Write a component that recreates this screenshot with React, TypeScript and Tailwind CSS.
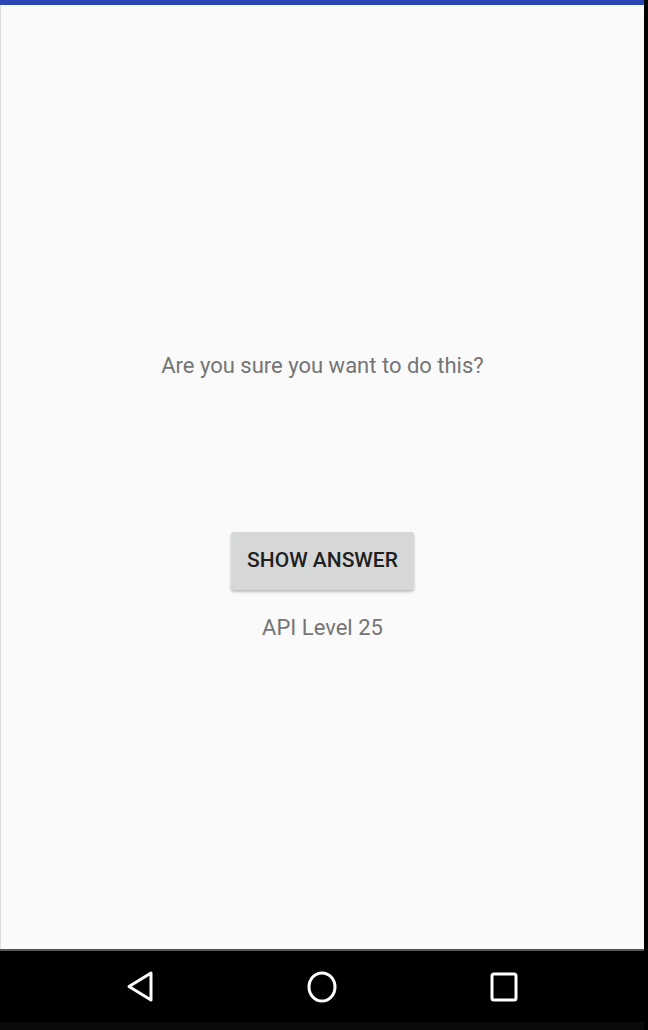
import React from "react";

function NavBar() {
    return (
        <div className="flex h-[73px] items-center border-t-2 border-[#555] bg-black pl-[126px]">
            <svg width="28" height="34" viewBox="0 0 28 34">
                <path d="M25 3 L3 16.5 L25 30 Z" fill="none" stroke="#fff" strokeWidth="3" strokeLinejoin="round" />
            </svg>
            <svg className="ml-[152px]" width="32" height="34" viewBox="0 0 32 34">
                <ellipse cx="16" cy="17" rx="13" ry="14" fill="none" stroke="#fff" strokeWidth="3" />
            </svg>
            <svg className="ml-[151px]" width="30" height="32" viewBox="0 0 30 32">
                <rect x="3" y="3" width="24" height="26" rx="2" fill="none" stroke="#fff" strokeWidth="3" />
            </svg>
        </div>
    );
}

export default function App() {
    return (
        <div className="flex h-[1030px] w-[648px] bg-black font-['Roboto',sans-serif]">
            <div className="flex w-[644px] flex-col">
                <div className="h-[5px] bg-[#2a45b4] shadow-[0_2px_4px_rgba(0,0,0,0.25)]" />
                <div className="flex flex-1 flex-col items-center border-l border-[#ddd] bg-[#fafafa]">
                    <p className="mt-[346px] text-[22px] leading-[30px] text-[#757575]">
                        Are you sure you want to do this?
                    </p>
                    <button className="mt-[151px] h-[58px] w-[183px] rounded-[3px] bg-[#d6d7d7] text-[21px] font-medium text-[#1f1f1f] shadow-[0_2px_3px_rgba(0,0,0,0.25)]">
                        SHOW ANSWER
                    </button>
                    <p className="mt-[24px] text-[22px] leading-[28px] text-[#757575]">API Level 25</p>
                </div>
                <NavBar />
                <div className="h-[8px] bg-[#0a0a0a]" />
            </div>
        </div>
    );
}
